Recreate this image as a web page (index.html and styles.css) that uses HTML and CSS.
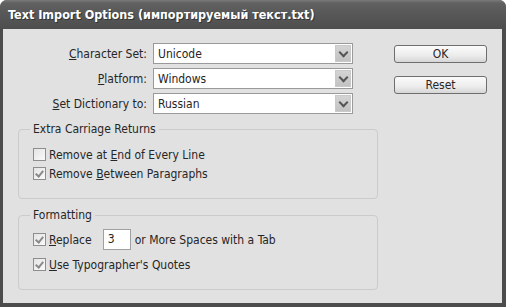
FILE: index.html
```html
<!DOCTYPE html>
<html lang="en">
<head>
    <meta charset="UTF-8">
    <title>Text Import Options</title>
    <link rel="stylesheet" href="styles.css">
</head>
<body>
    <div class="window">
        <div class="titlebar">Text Import Options (импортируемый текст.txt)</div>
        <div class="client">
            <div class="main">
                <div class="fields">
                    <label class="field-label"><u>C</u>haracter Set:</label>
                    <div class="select"><span>Unicode</span><i class="arrow"></i></div>
                    <label class="field-label"><u>P</u>latform:</label>
                    <div class="select"><span>Windows</span><i class="arrow"></i></div>
                    <label class="field-label"><u>S</u>et Dictionary to:</label>
                    <div class="select"><span>Russian</span><i class="arrow"></i></div>
                </div>

                <fieldset class="group group-returns">
                    <legend>Extra Carriage Returns</legend>
                    <div class="check-row"><span class="box"></span><span>Remove at <u>E</u>nd of Every Line</span></div>
                    <div class="check-row"><span class="box checked"></span><span>Remove <u>B</u>etween Paragraphs</span></div>
                </fieldset>

                <fieldset class="group group-format">
                    <legend>Formatting</legend>
                    <div class="check-row replace-row">
                        <span class="box checked"></span><span><u>R</u>eplace</span>
                        <span class="num-input">3</span>
                        <span>or More Spaces with a Tab</span>
                    </div>
                    <div class="check-row"><span class="box checked"></span><span><u>U</u>se Typographer's Quotes</span></div>
                </fieldset>
            </div>

            <div class="buttons">
                <button class="btn">OK</button>
                <button class="btn">Reset</button>
            </div>
        </div>
    </div>
</body>
</html>
```

FILE: styles.css
```css
/* Reset and font */
* {
    margin: 0;
    padding: 0;
    box-sizing: border-box;
}

body {
    background-color: #fff;
    font-family: Tahoma, "DejaVu Sans Condensed", "Liberation Sans", sans-serif;
    font-size: 12px;
    color: #262626;
}

u {
    text-decoration: underline;
    text-underline-offset: 1px;
}

/* Window frame */
.window {
    width: 506px;
    height: 307px;
    background-color: #4c4c4c;
    border-radius: 7px 7px 0 0;
    display: flex;
    flex-direction: column;
}

.titlebar {
    height: 29px;
    line-height: 30px;
    padding-left: 8px;
    color: #fff;
    font-weight: bold;
    font-size: 12.5px;
    border-radius: 7px 7px 0 0;
    background: linear-gradient(#7a7a7a 0, #616161 3px, #575757 50%, #4e4e4e 100%);
    text-shadow: 1px 1px 0 #333;
}

.client {
    flex: 1;
    margin: 0 4px 4px 3px;
    background-color: #e1e1e1;
    display: flex;
    padding: 14px 0 0 15px;
}

/* Left column */
.main {
    width: 360px;
}

.fields {
    display: grid;
    grid-template-columns: 129px 200px;
    column-gap: 6px;
    row-gap: 4px;
    align-items: center;
}

.field-label {
    text-align: right;
}

.select {
    height: 21px;
    background-color: #fff;
    border: 1px solid #9a9a9a;
    display: flex;
    align-items: center;
    justify-content: space-between;
    padding: 0 1px 0 4px;
}

.arrow {
    width: 16px;
    height: 17px;
    background: linear-gradient(#d4d4d4, #c2c2c2);
    border: 1px solid #c9c9c9;
    position: relative;
}

.arrow::after {
    content: "";
    position: absolute;
    left: 4px;
    top: 3px;
    width: 5px;
    height: 5px;
    border-right: 2px solid #555;
    border-bottom: 2px solid #555;
    transform: rotate(45deg);
}

/* Group boxes */
.group {
    border: 1px solid #cbcbcb;
    border-radius: 4px;
    padding: 0 0 0 14px;
}

.group legend {
    padding: 0 3px;
    margin-left: -3px;
    line-height: 15px;
}

.group-returns {
    margin-top: 8px;
    height: 77px;
    padding-top: 8px;
}

.group-format {
    margin-top: 9px;
    height: 82px;
    padding-top: 3px;
}

.check-row {
    display: flex;
    align-items: center;
    height: 19px;
}

.box {
    width: 13px;
    height: 13px;
    border: 1px solid #8e8e8e;
    background: linear-gradient(135deg, #e4e4e4, #fafafa);
    margin-right: 3px;
    position: relative;
    flex: none;
}

.box.checked::after {
    content: "";
    position: absolute;
    left: 3px;
    top: 1px;
    width: 3px;
    height: 6px;
    border-right: 2px solid #8a8a8a;
    border-bottom: 2px solid #8a8a8a;
    transform: rotate(40deg);
}

.replace-row {
    height: 21px;
    margin: 3px 0 5px;
}

.num-input {
    width: 28px;
    height: 21px;
    background-color: #fff;
    border: 1px solid #a0a0a0;
    margin: 0 4px 0 11px;
    padding-left: 4px;
    line-height: 19px;
}

/* Right column buttons */
.buttons {
    margin-left: 16px;
    padding-top: 2px;
    display: flex;
    flex-direction: column;
    gap: 13px;
}

.btn {
    width: 93px;
    height: 18px;
    border: 1px solid #6e6e6e;
    border-radius: 3px;
    background: linear-gradient(#fbfbfb, #ececec 60%, #d6d6d6);
    font-family: inherit;
    font-size: 12px;
    color: #262626;
}
```
